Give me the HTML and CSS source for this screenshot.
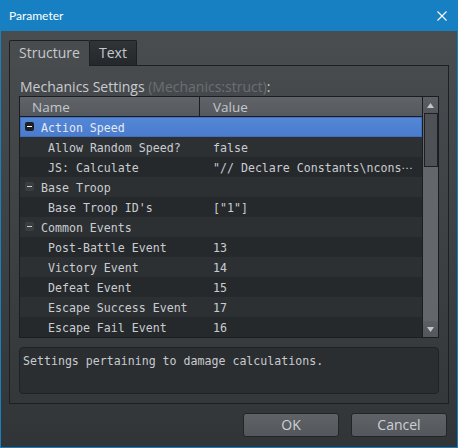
FILE: index.html
```html
<!DOCTYPE html>
<html>
<head>
<meta charset="utf-8">
<link rel="stylesheet" href="styles.css">
</head>
<body>
<div class="window">
  <div class="titlebar">
    <span class="title">Parameter</span>
    <svg class="close" width="10" height="10" viewBox="0 0 10 10"><path d="M0.5 0.5L9.5 9.5M9.5 0.5L0.5 9.5" stroke="#ffffff" stroke-width="1.1" fill="none"/></svg>
  </div>
  <div class="content">
    <div class="tabs">
      <div class="tab active">Structure</div>
      <div class="tab">Text</div>
    </div>
    <div class="panel">
      <div class="label">Mechanics Settings <span class="dim">(Mechanics:struct)</span>:</div>
      <div class="table">
        <div class="tree">
          <div class="header">
            <div class="hcell name">Name</div>
            <div class="hcell value">Value</div>
          </div>
          <div class="row group selected"><div class="cell name"><span class="box"></span>Action Speed</div><div class="cell value"></div></div>
          <div class="row even"><div class="cell name child">Allow Random Speed?</div><div class="cell value">false</div></div>
          <div class="row odd"><div class="cell name child">JS: Calculate</div><div class="cell value">"// Declare Constants\ncons<span class="ell">⋯</span></div></div>
          <div class="row group even"><div class="cell name"><span class="box"></span>Base Troop</div><div class="cell value"></div></div>
          <div class="row odd"><div class="cell name child">Base Troop ID's</div><div class="cell value">["1"]</div></div>
          <div class="row group even"><div class="cell name"><span class="box"></span>Common Events</div><div class="cell value"></div></div>
          <div class="row odd"><div class="cell name child">Post-Battle Event</div><div class="cell value">13</div></div>
          <div class="row even"><div class="cell name child">Victory Event</div><div class="cell value">14</div></div>
          <div class="row odd"><div class="cell name child">Defeat Event</div><div class="cell value">15</div></div>
          <div class="row even"><div class="cell name child">Escape Success Event</div><div class="cell value">17</div></div>
          <div class="row odd"><div class="cell name child">Escape Fail Event</div><div class="cell value">16</div></div>
        </div>
        <div class="scrollbar">
          <div class="sbtn"><svg width="7" height="5" viewBox="0 0 7 5"><path d="M3.5 0L7 5H0Z" fill="#c3c7cb"/></svg></div>
          <div class="track"><div class="thumb"></div></div>
          <div class="sbtn"><svg width="7" height="5" viewBox="0 0 7 5"><path d="M0 0H7L3.5 5Z" fill="#c3c7cb"/></svg></div>
        </div>
      </div>
      <div class="desc">Settings pertaining to damage calculations.</div>
    </div>
    <div class="buttons">
      <button class="btn">OK</button>
      <button class="btn">Cancel</button>
    </div>
  </div>
</div>
</body>
</html>
```

FILE: styles.css
```css
* { box-sizing: border-box; }
html, body { margin: 0; padding: 0; }
body {
  width: 458px;
  height: 448px;
  overflow: hidden;
  background: #1780c2;
  font-family: "Open Sans", sans-serif;
}
.window {
  width: 458px;
  height: 448px;
  display: flex;
  flex-direction: column;
}
.titlebar {
  height: 31px;
  flex: none;
  background: #1780c2;
  display: flex;
  align-items: center;
  justify-content: space-between;
  padding: 0 11px 0 9px;
  color: #ffffff;
}
.title {
  font-family: Lato, sans-serif;
  font-size: 12px;
  line-height: 16px;
}
.close { display: block; }
.content {
  flex: 1;
  border: 1px solid #1780c2;
  border-top: 0;
  background: linear-gradient(#4a4d50, #323538);
  padding: 9px 8px 0;
  display: flex;
  flex-direction: column;
}
.tabs {
  display: flex;
  height: 25px;
  flex: none;
}
.tab {
  height: 25px;
  font-size: 14px;
  line-height: 23px;
  color: #c5c9cd;
  text-align: center;
  border: 1px solid #1d2023;
  border-bottom: 0;
  border-radius: 2px 2px 0 0;
}
.tab.active {
  width: 81px;
  height: 26px;
  margin-bottom: -1px;
  position: relative;
  z-index: 1;
  background: #494c4f;
}
.tab:not(.active) {
  width: 47px;
  border-left: 0;
  border-radius: 0 2px 0 0;
  background: linear-gradient(#313437, #25282b);
}
.panel {
  height: 339px;
  flex: none;
  border: 1px solid #1d2023;
  padding: 0 9px 9px;
  display: flex;
  flex-direction: column;
}
.label {
  padding: 13px 0 0 1px;
  line-height: 16px;
  font-size: 14px;
  color: #c8ccd0;
  margin-bottom: 1px;
  white-space: nowrap;
}
.dim { color: #6b6f73; }
.table {
  height: 242px;
  flex: none;
  border: 1px solid #1b1e21;
  display: flex;
}
.tree {
  width: 402px;
  background: #26292c;
}
.header {
  height: 20px;
  display: flex;
  background: linear-gradient(#606468, #55595d);
  border-bottom: 1px solid #1b1e21;
}
.hcell {
  font-size: 13.5px;
  line-height: 19px;
  padding-top: 1px;
  color: #c3c7cb;
}
.hcell.name {
  width: 180px;
  padding-left: 12px;
  border-right: 1px solid #1b1e21;
}
.hcell.value { padding-left: 13px; }
.row {
  height: 20px;
  display: flex;
  font-family: "DejaVu Sans Mono", monospace;
  font-size: 11.6px;
  line-height: 20px;
  color: #c9cdd1;
  white-space: nowrap;
}
.row.even { background: #2d3033; }
.row.odd { background: #26292c; }
.row.selected {
  background: linear-gradient(#5587d8, #4a7bcc);
  box-shadow: inset 0 0 0 1px #3f6fbd;
  color: #e4eaf2;
}
.cell {
  padding-top: 1px;
}
.cell.name {
  width: 180px;
  padding-left: 5px;
}
.cell.name.child { padding-left: 28px; }
.cell.value {
  padding-left: 13px;
  overflow: hidden;
}
.box {
  display: inline-block;
  width: 9px;
  height: 9px;
  margin-right: 7px;
  vertical-align: 1px;
  border-radius: 2px;
  background: linear-gradient(#c8ccd0, #c8ccd0) center / 5px 1px no-repeat, #3b3e41;
}
.selected .box {
  background: linear-gradient(#ffffff, #ffffff) center / 5px 1px no-repeat, #1e2124;
}
.ell { font-family: "DejaVu Sans", sans-serif; }
.scrollbar {
  width: 16px;
  border-left: 1px solid #1b1e21;
  display: flex;
  flex-direction: column;
  background: #686c70;
}
.sbtn {
  height: 16px;
  flex: none;
  background: linear-gradient(#5c6064, #53575b);
  display: flex;
  align-items: center;
  justify-content: center;
}
.sbtn svg { display: block; }
.track {
  flex: 1;
  padding-left: 1px;
  background: #63676b;
}
.thumb {
  width: 14px;
  height: 54px;
  border: 1px solid #1d2023;
  background: #4e5256;
}
.desc {
  margin-top: 9px;
  height: 47px;
  border: 1px solid #1f2225;
  border-radius: 4px;
  background: #2b2e31;
  padding: 5px 3px 0;
  font-family: "DejaVu Sans Mono", monospace;
  font-size: 11.6px;
  line-height: 16px;
  color: #c7cbcf;
  white-space: nowrap;
}
.buttons {
  display: flex;
  justify-content: flex-end;
  gap: 12px;
  padding: 9px 2px 0 0;
}
.btn {
  width: 96px;
  height: 24px;
  border: 1px solid #222528;
  border-radius: 3px;
  background: linear-gradient(#5f6367, #54585c);
  color: #cdd1d5;
  font-family: "Open Sans", sans-serif;
  font-size: 14px;
  line-height: 20px;
  padding: 0;
}
```
